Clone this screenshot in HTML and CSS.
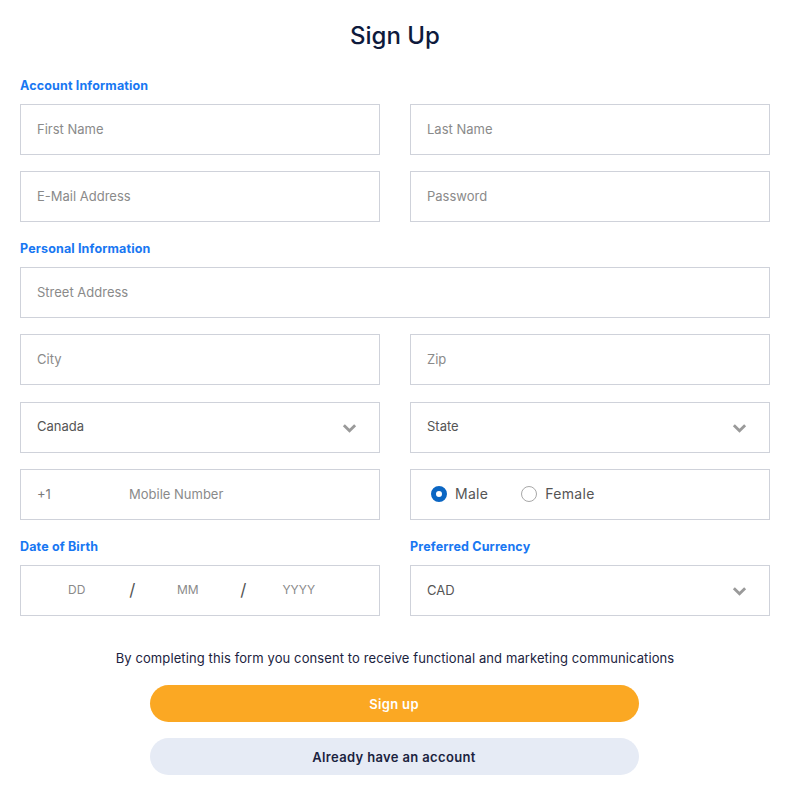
FILE: index.html
```html
<!DOCTYPE html>
<html lang="en">
  <head>
    <meta charset="UTF-8" />
    <meta name="viewport" content="width=device-width, initial-scale=1.0" />
    <title>Sign Up</title>
    <link rel="stylesheet" href="styles.css">
  </head>
  <body>
    <div class="container">
      <h1>Sign Up</h1>

      <h2 class="section-title">Account Information</h2>
      <div class="grid">
        <div class="field"><input type="text" placeholder="First Name" /></div>
        <div class="field"><input type="text" placeholder="Last Name" /></div>
        <div class="field"><input type="email" placeholder="E-Mail Address" /></div>
        <div class="field"><input type="password" placeholder="Password" /></div>
      </div>

      <h2 class="section-title">Personal Information</h2>
      <div class="grid personal">
        <div class="field full"><input type="text" placeholder="Street Address" /></div>
        <div class="field"><input type="text" placeholder="City" /></div>
        <div class="field"><input type="text" placeholder="Zip" /></div>
        <div class="field select">
          <span class="value">Canada</span>
          <svg class="chevron" viewBox="0 0 16 10" width="15" height="10"><path d="M2 2l6 6 6-6" /></svg>
        </div>
        <div class="field select">
          <span class="value">State</span>
          <svg class="chevron" viewBox="0 0 16 10" width="15" height="10"><path d="M2 2l6 6 6-6" /></svg>
        </div>
        <div class="field phone">
          <span class="prefix">+1</span>
          <input type="tel" placeholder="Mobile Number" />
        </div>
        <div class="field radios">
          <label class="radio"><span class="dot checked"></span>Male</label>
          <label class="radio"><span class="dot"></span>Female</label>
        </div>
      </div>

      <div class="grid">
        <div>
          <h2 class="section-title">Date of Birth</h2>
          <div class="field dob">
            <span class="part">DD</span>
            <span class="slash">/</span>
            <span class="part">MM</span>
            <span class="slash">/</span>
            <span class="part">YYYY</span>
          </div>
        </div>
        <div>
          <h2 class="section-title">Preferred Currency</h2>
          <div class="field select">
            <span class="value">CAD</span>
            <svg class="chevron" viewBox="0 0 16 10" width="15" height="10"><path d="M2 2l6 6 6-6" /></svg>
          </div>
        </div>
      </div>

      <p class="consent">By completing this form you consent to receive functional and marketing communications</p>

      <div class="actions">
        <button class="btn primary">Sign up</button>
        <button class="btn secondary">Already have an account</button>
      </div>
    </div>
  </body>
</html>
```

FILE: styles.css
```css
body {
  margin: 0;
  background: #ffffff;
  font-family: Inter, "Noto Sans", sans-serif;
  color: #1b2340;
}

.container {
  width: 750px;
  margin: 0 20px;
}

h1 {
  margin: 0;
  padding-top: 20px;
  font-size: 24px;
  line-height: 32px;
  font-weight: 500;
  text-align: center;
  color: #0e1a3c;
}

.section-title {
  margin: 18px 0 11px;
  padding-top: 1px;
  font-size: 12.5px;
  line-height: 15px;
  font-weight: 700;
  letter-spacing: 0.15px;
  color: #1877f2;
}

h1 + .section-title {
  margin-top: 25px;
}

.grid {
  display: grid;
  grid-template-columns: 1fr 1fr;
  column-gap: 30px;
  row-gap: 16px;
}

.grid.personal {
  row-gap: 16.4px;
}

.field {
  box-sizing: border-box;
  height: 51px;
  border: 1px solid #cfd2da;
  display: flex;
  align-items: center;
  padding: 0 16px 2px;
  font-size: 13px;
  color: #555;
}

.field.full {
  grid-column: 1 / 3;
}

.field input {
  border: none;
  outline: none;
  padding: 0;
  width: 100%;
  font-family: inherit;
  font-size: 13px;
  color: #333;
  background: transparent;
}

.field input::placeholder {
  color: #8a8a8a;
}

.select {
  justify-content: space-between;
  padding-right: 22px;
}

.chevron {
  margin-top: 3px;
}

.chevron path {
  fill: none;
  stroke: #9a9a9a;
  stroke-width: 3;
}

.phone .prefix {
  width: 92px;
  flex-shrink: 0;
  color: #7a7a7a;
}

.radios {
  gap: 33px;
  padding-left: 20px;
}

.radio {
  display: flex;
  align-items: center;
  gap: 8px;
  font-size: 14px;
  letter-spacing: 0.3px;
  color: #555;
}

.dot {
  box-sizing: border-box;
  width: 16px;
  height: 16px;
  border-radius: 50%;
  border: 1px solid #a8a8a8;
}

.dot.checked {
  border: 5px solid #0b66c3;
}

.dob {
  padding-left: 28px;
  color: #8a8a8a;
  font-size: 12px;
}

.dob .part,
.dob .slash {
  width: 55.5px;
  text-align: center;
}

.dob .slash {
  font-size: 17px;
  color: #555;
}

.consent {
  margin: 32px 0 17px;
  font-size: 13px;
  line-height: 20px;
  letter-spacing: 0.1px;
  text-align: center;
  color: #1b2340;
}

.actions {
  display: flex;
  flex-direction: column;
  align-items: center;
  gap: 16px;
  margin-right: 2px;
}

.btn {
  width: 489px;
  height: 37px;
  border: none;
  border-radius: 19px;
  font-family: inherit;
  font-size: 13px;
  font-weight: 600;
  letter-spacing: 0.35px;
  cursor: pointer;
}

.primary {
  background: #fba823;
  color: #ffffff;
}

.secondary {
  background: #e6ebf5;
  color: #1b2340;
}
```
